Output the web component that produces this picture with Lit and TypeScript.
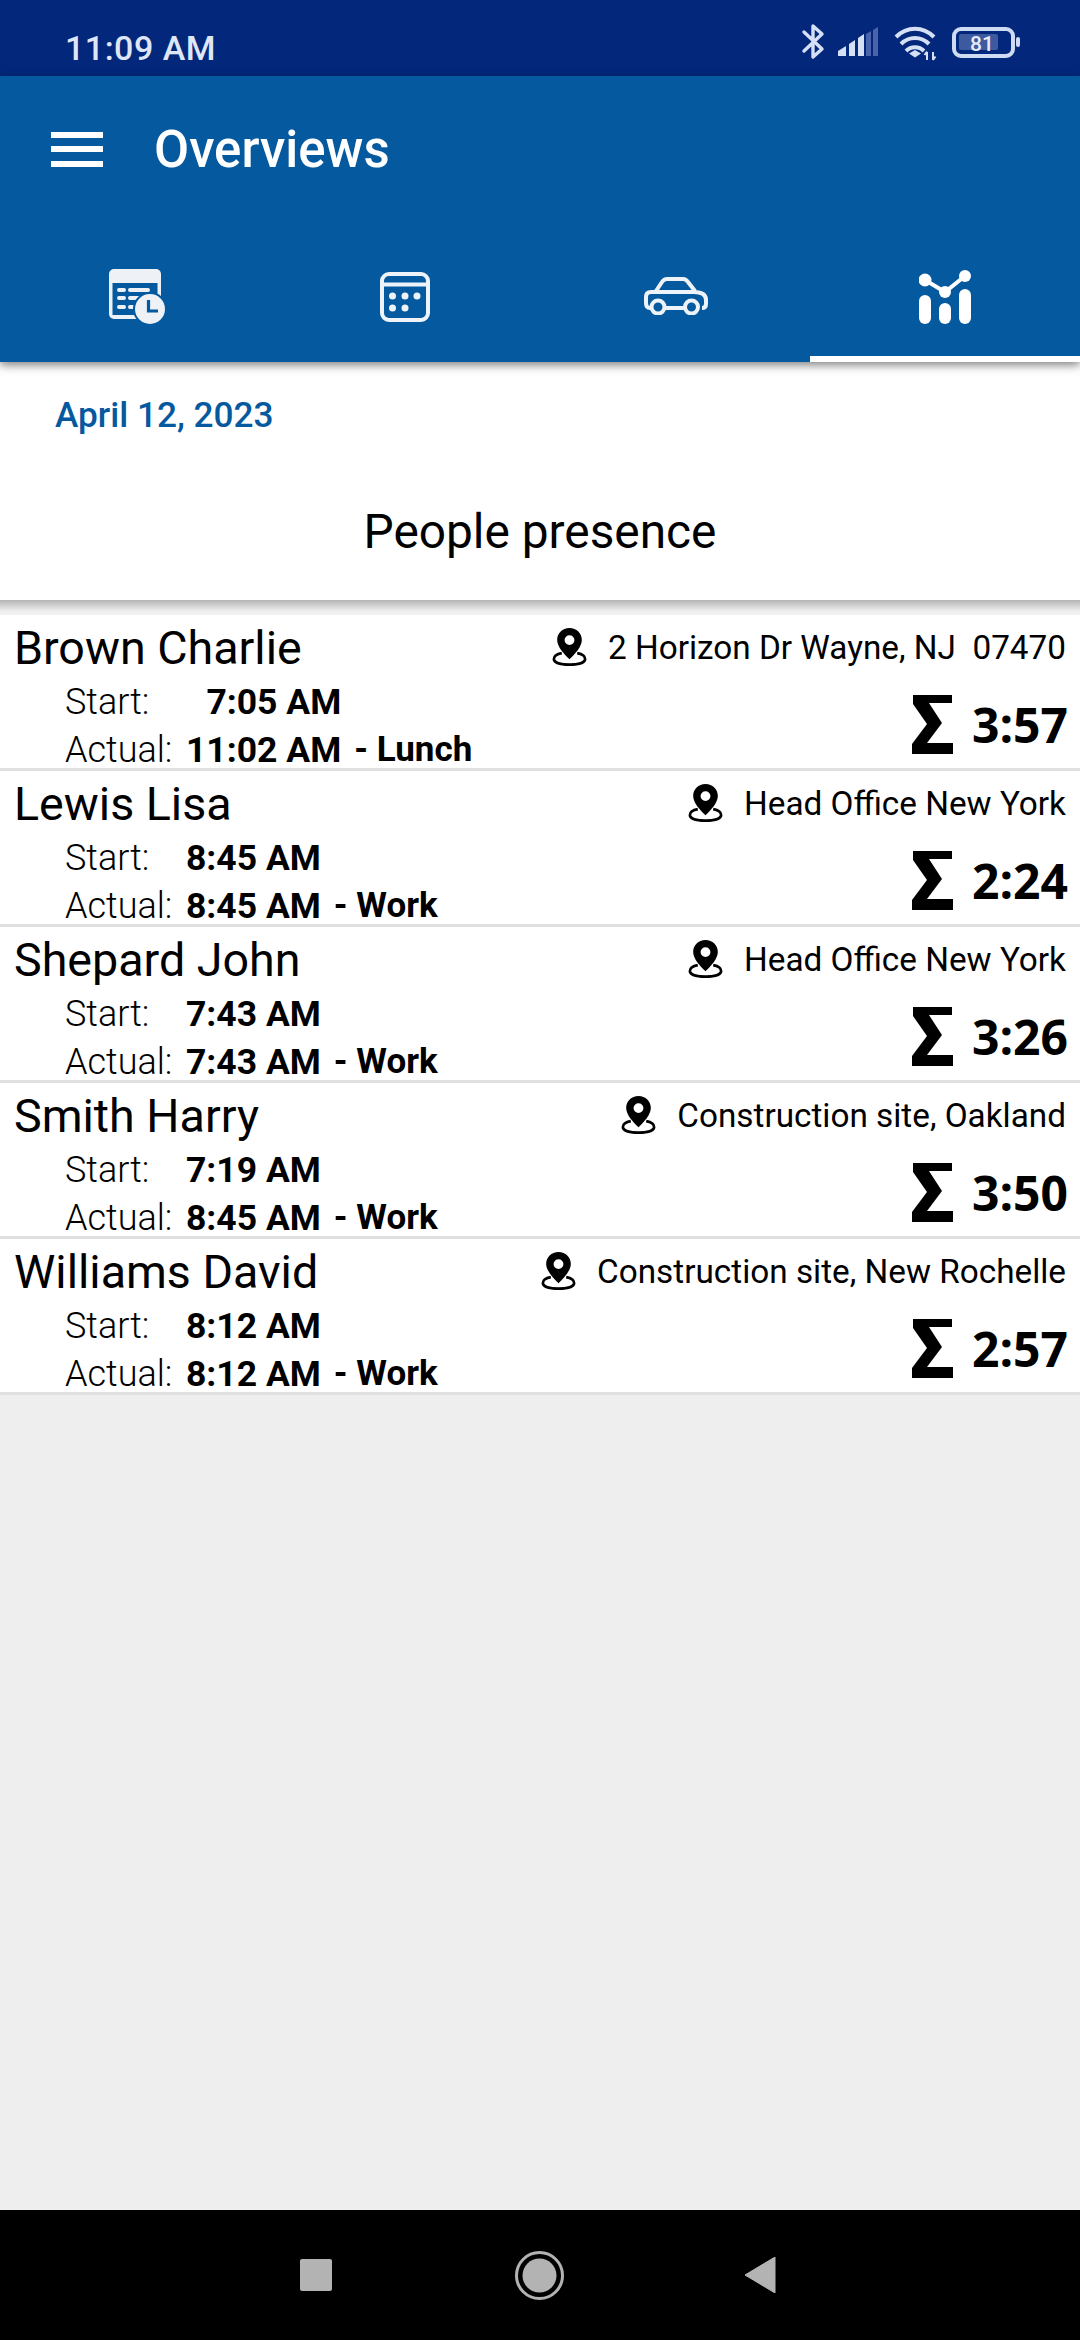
import { LitElement, html, css } from "lit";
import { customElement } from "lit/decorators.js";

interface Person { name: string; place: string; start: string; actual: string; kind: string; total: string; }
const people: Person[] = [
  { name: "Brown Charlie", place: "2 Horizon Dr Wayne, NJ\u00a0\u00a007470", start: "7:05 AM", actual: "11:02 AM", kind: "Lunch", total: "3:57" },
  { name: "Lewis Lisa", place: "Head Office New York", start: "8:45 AM", actual: "8:45 AM", kind: "Work", total: "2:24" },
  { name: "Shepard John", place: "Head Office New York", start: "7:43 AM", actual: "7:43 AM", kind: "Work", total: "3:26" },
  { name: "Smith Harry", place: "Construction site, Oakland", start: "7:19 AM", actual: "8:45 AM", kind: "Work", total: "3:50" },
  { name: "Williams David", place: "Construction site, New Rochelle", start: "8:12 AM", actual: "8:12 AM", kind: "Work", total: "2:57" },
];

const pin = html`<svg class="pin" width="35" height="38" viewBox="0 0 33 37">
  <path d="M9 24.5C4 25.5 1.3 27.8 1.3 30.2 1.3 33.8 8 35.7 16.5 35.7S31.7 33.8 31.7 30.2C31.7 27.8 29 25.5 24 24.5" fill="none" stroke="#000" stroke-width="2.6"/>
  <path fill-rule="evenodd" d="M16.5 0C9.6 0 4.5 5.2 4.5 11.6c0 6.6 6.6 13.4 12 18.9 5.4-5.5 12-12.3 12-18.9C28.5 5.2 23.4 0 16.5 0Zm0 7a4.8 4.8 0 1 1 0 9.6 4.8 4.8 0 0 1 0-9.6Z" fill="#000"/>
</svg>`;

const sigma = html`<svg class="sigma" width="42" height="59" viewBox="0 0 42 59">
  <path d="M1 0H40V8H17L30 28 15 48H41V59H0V49L15 29 1 9Z" fill="#000"/>
</svg>`;

@customElement("app-root")
export class AppRoot extends LitElement {
  static styles = css`
    :host { display: block; width: 1080px; height: 2340px; font-family: Roboto, "Liberation Sans", sans-serif; color: #000; background: #eeeeee; }
    .page { display: flex; flex-direction: column; height: 2340px; }
    .status { height: 76px; background: #03287b; color: #dfe6f7; display: flex; align-items: center; padding: 0 60px 0 65px; box-sizing: border-box; flex: none; }
    .time { font-size: 34px; font-weight: 500; line-height: 40px; margin-top: 20px; letter-spacing: 0.5px; }
    .sicons { margin-left: auto; display: block; margin-top: 12px; }
    .header { background: #05599e; height: 286px; flex: none; box-shadow: 0 3px 9px rgba(0,0,0,.5); position: relative; z-index: 1; display: flex; flex-direction: column; }
    .toolbar { height: 146px; display: flex; align-items: center; padding-left: 51px; flex: none; }
    .burger { display: flex; flex-direction: column; gap: 8.5px; width: 52px; }
    .burger span { display: block; height: 6px; background: #fff; }
    .title { color: #fff; font-size: 51px; font-weight: 500; margin: 1px 0 0 51px; line-height: 60px; }
    .tabs { display: flex; height: 140px; }
    .tab { flex: 1; display: flex; align-items: center; justify-content: center; padding-top: 16px; border-bottom: 6px solid transparent; box-sizing: border-box; }
    .tab.on { border-bottom-color: #fff; }
    .nudge { margin-left: 4px; }
    .car { margin: 0 0 2px 2px; }
    .top { background: #fff; height: 238px; flex: none; display: flex; flex-direction: column; }
    .date { color: #05599e; font-size: 35.2px; font-weight: 500; line-height: 40px; padding: 33px 0 0 55px; }
    .heading { font-size: 47.8px; font-weight: 400; line-height: 60px; text-align: center; margin-top: 67px; }
    .list { flex: 1; background: #eeeeee; display: flex; flex-direction: column; }
    .shade { height: 15px; background: linear-gradient(#b4b4b4, #ececec 70%, #f4f4f4); flex: none; }
    .row { height: 156px; flex: none; box-sizing: border-box; background: #fff; border-bottom: 3px solid #e0e0e0; padding: 0 14px; display: flex; justify-content: space-between; }
    .name { font-size: 46.6px; line-height: 66px; }
    .times { display: grid; grid-template-columns: 121px auto auto; grid-auto-rows: 40px; row-gap: 8px; margin: 1px 0 0 51px; font-size: 36px; line-height: 40px; justify-content: start; }
    .lbl { font-weight: 300; }
    .val { font-weight: 700; font-size: 35.5px; text-align: right; white-space: nowrap; }
    .kind { font-weight: 700; font-size: 35px; white-space: nowrap; padding-left: 13px; }
    .right { display: flex; flex-direction: column; align-items: flex-end; }
    .place { height: 64px; display: flex; align-items: center; font-size: 33.3px; font-weight: 400; white-space: nowrap; }
    .pin { margin-right: 21px; flex: none; }
    .total { display: flex; align-items: center; margin-top: 16px; height: 59px; }
    .sum { font-family: "Open Sans", "Liberation Sans", sans-serif; font-weight: 700; font-size: 48px; line-height: 59px; width: 114px; text-align: right; margin-right: -2px; }
    .sigma { display: block; }
    .nav { height: 130px; background: #000; flex: none; display: flex; align-items: center; padding-left: 300px; }
    .square { width: 32px; height: 32px; background: #b3b3b3; border-radius: 2px; flex: none; }
    .home { margin-left: 183px; display: block; }
    .back { margin-left: 180px; display: block; }
  `;

  private statusIcons() {
    return html`<svg class="sicons" width="220" height="44" viewBox="800 28 220 44">
      <path d="M804 38 822 55 813 63V32L822 40 804 57" fill="none" stroke="#d5dff5" stroke-width="3.4" stroke-linejoin="round" stroke-linecap="round"/>
      <path d="M838 62V57L846 52V62ZM849 62V50L855 46V62ZM858 62V44L864 40V62Z" fill="#d5dff5"/>
      <path d="M866 62V40L871 37V62ZM873 62V36L878 33V62Z" fill="#4a64ab"/>
      <path d="M896 43C907 32 923 32 934 43" fill="none" stroke="#d5dff5" stroke-width="4"/>
      <path d="M901 50C909 42 921 42 929 50" fill="none" stroke="#d5dff5" stroke-width="4"/>
      <path d="M906 57C911 52 919 52 924 57" fill="none" stroke="#d5dff5" stroke-width="4"/>
      <path d="M909 59.5L915 56 921 59.5 915 63.5Z" fill="#d5dff5"/>
      <path d="M927 66V58M924.5 61 927 57.5M933 58V66M933 66 935.5 62.5" fill="none" stroke="#d5dff5" stroke-width="2"/>
      <rect x="954" y="35" width="59" height="27" rx="7" fill="none" stroke="#cfdaf3" stroke-width="4"/>
      <rect x="959" y="40" width="39" height="16" rx="2" fill="#3e5a9f"/>
      <rect x="1016" y="43" width="4" height="10" rx="2" fill="#cfdaf3"/>
      <text x="982" y="57" text-anchor="middle" font-family="Roboto" font-weight="500" font-size="21" fill="#e8edf9">81</text>
    </svg>`;
  }

  private tabIcons() {
    const line = "fill:none;stroke:#eef3f9;stroke-width:4";
    return [
      html`<svg class="nudge" width="56" height="56" viewBox="0 0 56 56">
        <path fill-rule="evenodd" d="M5 0H47A5 5 0 0 1 52 5V45A5 5 0 0 1 47 50H5A5 5 0 0 1 0 45V5A5 5 0 0 1 5 0ZM3.5 14V46H48.5V14Z" fill="#eef1f6"/>
        <path d="M10 21H15M21 21H39M10 29H15M21 29H32M10 38H15M21 38H25" stroke="#eef1f6" stroke-width="4" stroke-linecap="round"/>
        <circle cx="41" cy="40" r="17" fill="#05599e"/>
        <circle cx="41" cy="40" r="15" fill="#eef1f6"/>
        <path d="M39.5 31V42H49" fill="none" stroke="#05599e" stroke-width="3.2"/>
      </svg>`,
      html`<svg width="50" height="50" viewBox="0 0 50 50">
        <rect x="2" y="2" width="46" height="46" rx="7" style=${line}/>
        <path d="M2 12.5H48" style=${line}/>
        <g fill="#eef3f9"><circle cx="12.5" cy="24" r="3.5"/><circle cx="25" cy="24" r="3.5"/><circle cx="37" cy="24" r="3.5"/><circle cx="12.5" cy="36" r="3.5"/><circle cx="25" cy="36" r="3.5"/></g>
      </svg>`,
      html`<svg class="car" width="64" height="38" viewBox="0 0 64 38">
        <path d="M12 14 18 5Q20 2 23 2H39Q42 2 44 5L51 14M8 31H6Q2 31 2 26V20Q2 15 7 15H50Q62 15 62 23V27Q62 31 58 31M21 31H41" style=${line} stroke-linejoin="round"/>
        <circle cx="14" cy="30" r="6.5" style=${line}/>
        <circle cx="47.5" cy="30" r="6.5" style=${line}/>
      </svg>`,
      html`<svg width="52" height="54" viewBox="0 0 52 54">
        <path d="M6 10 26 22 46 6" fill="none" stroke="#fff" stroke-width="4"/>
        <g fill="#fff"><circle cx="6" cy="10" r="6.5"/><circle cx="26" cy="22" r="6"/><circle cx="46" cy="6" r="6"/>
        <rect x="0" y="25" width="12" height="29" rx="6"/><rect x="20" y="33" width="12" height="21" rx="6"/><rect x="40" y="19" width="12" height="35" rx="6"/></g>
      </svg>`,
    ];
  }

  render() {
    return html`<div class="page">
      <div class="status"><span class="time">11:09 AM</span>${this.statusIcons()}</div>
      <div class="header">
        <div class="toolbar">
          <div class="burger"><span></span><span></span><span></span></div>
          <div class="title">Overviews</div>
        </div>
        <div class="tabs">
          ${this.tabIcons().map((ic, i) => html`<div class="tab ${i === 3 ? "on" : ""}">${ic}</div>`)}
        </div>
      </div>
      <div class="top">
        <div class="date">April 12, 2023</div>
        <div class="heading">People presence</div>
      </div>
      <div class="list">
        <div class="shade"></div>
        ${people.map((p) => html`<div class="row">
          <div>
            <div class="name">${p.name}</div>
            <div class="times">
              <span class="lbl">Start:</span><span class="val">${p.start}</span><span></span>
              <span class="lbl">Actual:</span><span class="val">${p.actual}</span><span class="kind">- ${p.kind}</span>
            </div>
          </div>
          <div class="right">
            <div class="place">${pin}<span>${p.place}</span></div>
            <div class="total">${sigma}<span class="sum">${p.total}</span></div>
          </div>
        </div>`)}
      </div>
      <div class="nav">
        <div class="square"></div>
        <svg class="home" width="49" height="49" viewBox="0 0 49 49"><circle cx="24.5" cy="24.5" r="23" fill="none" stroke="#b3b3b3" stroke-width="3"/><circle cx="24.5" cy="24.5" r="17" fill="#b3b3b3"/></svg>
        <svg class="back" width="32" height="36" viewBox="0 0 32 36"><path d="M1 18 31 0V36Z" fill="#b3b3b3" stroke="#b3b3b3" stroke-width="1" stroke-linejoin="round"/></svg>
      </div>
    </div>`;
  }
}
